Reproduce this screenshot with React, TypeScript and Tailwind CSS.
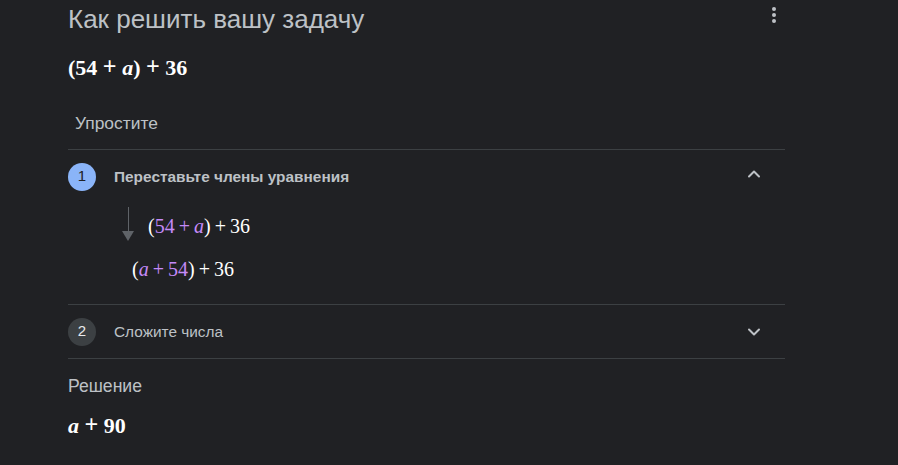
import { ChevronUp, ChevronDown } from "lucide-react";

const sans = "font-['Arial','Liberation_Sans',sans-serif]";
const serif = "font-['Times_New_Roman','Liberation_Serif',serif]";
const thin = "\u2009+\u2009";

// wider math-style plus used in the bold expressions
function Plus() {
  return <> <span className="text-[1.1em] leading-none">+</span> </>;
}

function Kebab() {
  return (
    <div className="flex flex-col gap-[2px] items-center pt-[7px]">
      <span className="w-[4px] h-[4px] rounded-full bg-[#bdc1c6]" />
      <span className="w-[4px] h-[4px] rounded-full bg-[#bdc1c6]" />
      <span className="w-[4px] h-[4px] rounded-full bg-[#bdc1c6]" />
    </div>
  );
}

function StepHeader({ n, title, open }: { n: number; title: string; open: boolean }) {
  return (
    <div className="flex items-center h-[53px]">
      <div
        className={
          "w-[28px] h-[28px] rounded-full flex items-center justify-center text-[15px] " +
          (open ? "bg-[#8ab4f8] text-[#202124]" : "bg-[#3c4043] text-[#e8eaed]")
        }
      >
        {n}
      </div>
      <div className={"ml-[18px] text-[15.4px] text-[#bdc1c6] flex-1 " + (open ? "font-bold" : "")}>{title}</div>
      <div className={"w-[24px] mr-[19px] flex justify-center text-[#bdc1c6] " + (open ? "-mt-[6px]" : "")}>
        {open ? <ChevronUp size={20} strokeWidth={2.4} /> : <ChevronDown size={20} strokeWidth={2.4} />}
      </div>
    </div>
  );
}

export default function App() {
  return (
    <div className={"w-[898px] h-[465px] bg-[#202124] overflow-hidden " + sans}>
      <div className="ml-[68px] w-[717px] flex flex-col">
        <div className="flex justify-between h-[40px]">
          <h1 className="text-[26px] text-[#bdc1c6] leading-[38px]">Как решить вашу задачу</h1>
          <div className="mr-[9px]">
            <Kebab />
          </div>
        </div>
        <div className={"text-[22px] font-bold text-white leading-[56px] " + serif}>
          (54<Plus /><i>a</i>)<Plus />36
        </div>
        <div className="pl-[7px] text-[17.4px] text-[#bdc1c6] leading-[54px] h-[53px]">Упростите</div>

        <div className="border-t border-[#3c4043]">
          <StepHeader n={1} title="Переставьте члены уравнения" open />
          <div className="flex h-[101px]">
            <div className="w-[64px] flex flex-col items-end pt-[4px]">
              <div className="w-[1px] h-[30px] bg-[#5f6368] mr-[3px]" />
              <div className="w-0 h-0 border-l-[6px] border-r-[6px] border-t-[10px] border-l-transparent border-r-transparent border-t-[#5f6368] -mt-[6px] mr-[-2px]" />
            </div>
            <div className={"flex flex-col text-[20px] text-white " + serif}>
              <div className="ml-[16px] leading-[42px] mt-[2px]">
                (<span className="text-[#c58af9]">54{thin}<i>a</i></span>){thin}36
              </div>
              <div className="leading-[42px] mt-[1px]">
                (<span className="text-[#c58af9]"><i>a</i>{thin}54</span>){thin}36
              </div>
            </div>
          </div>
        </div>

        <div className="border-t border-[#3c4043]">
          <StepHeader n={2} title="Сложите числа" open={false} />
        </div>

        <div className="border-t border-[#3c4043] h-[107px]">
          <div className="text-[17.6px] text-[#bdc1c6] leading-[20px] mt-[17px]">Решение</div>
          <div className={"text-[22px] font-bold text-white leading-[28px] mt-[16px] " + serif}>
            <i>a</i><Plus />90
          </div>
        </div>
        <div className="border-t border-[#3c4043]" />
      </div>
    </div>
  );
}
